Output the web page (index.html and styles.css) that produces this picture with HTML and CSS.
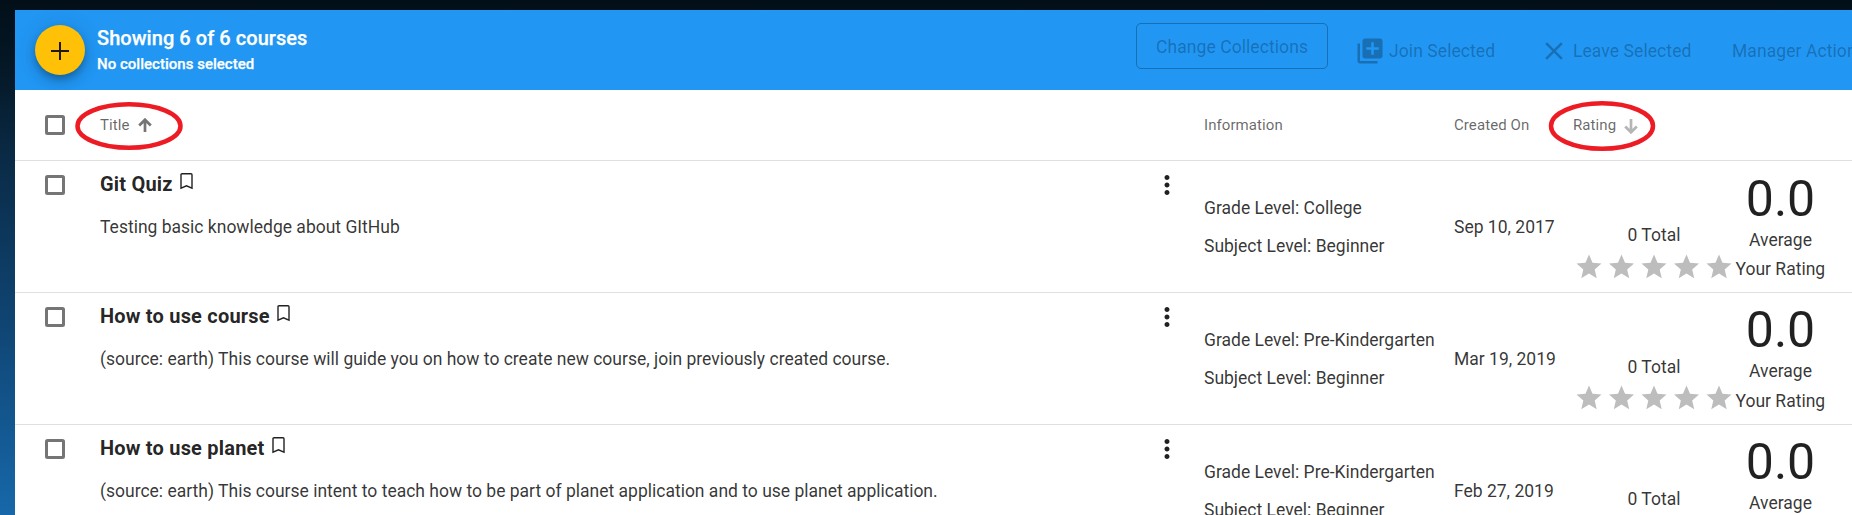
FILE: index.html
```
<!DOCTYPE html>
<html lang="en">
<head>
<meta charset="utf-8">
<title>Courses</title>
<link rel="stylesheet" href="styles.css">
</head>
<body>
<svg class="sprite" aria-hidden="true">
  <symbol id="bookmark" viewBox="0 0 13 17"><path d="M2 .75h9q1 0 1 1v13.500l-5.500-2.400L1 15.250V1.750q0-1 1-1z" fill="none" stroke="currentColor" stroke-width="1.400"/></symbol>
  <symbol id="more" viewBox="0 0 24 24"><path d="M12 8c1.100 0 2-.9 2-2s-.9-2-2-2-2 .9-2 2 .9 2 2 2zm0 2c-1.100 0-2 .9-2 2s.9 2 2 2 2-.9 2-2-.9-2-2-2zm0 6c-1.100 0-2 .9-2 2s.9 2 2 2 2-.9 2-2-.9-2-2-2z"/></symbol>
  <symbol id="star" viewBox="0 0 24 24"><path d="M12 17.270L18.180 21l-1.640-7.030L22 9.240l-7.190-.61L12 2 9.190 8.630 2 9.240l5.460 4.730L5.820 21z"/></symbol>
  <symbol id="stars" viewBox="0 0 160 30">
    <use href="#star" x="0" width="30" height="30"/><use href="#star" x="32.500" width="30" height="30"/><use href="#star" x="65" width="30" height="30"/><use href="#star" x="97.500" width="30" height="30"/><use href="#star" x="130" width="30" height="30"/>
  </symbol>
</svg>
<main class="panel">
  <header class="toolbar">
    <button class="fab" aria-label="Add"><svg width="18" height="18" viewBox="0 0 18 18"><path d="M9 0v18M0 9h18"/></svg></button>
    <div class="summary">
      <div class="summary-title">Showing 6 of 6 courses</div>
      <div class="summary-sub">No collections selected</div>
    </div>
    <nav class="actions">
      <span class="outlined">Change Collections</span>
      <span class="action join"><svg width="30" height="30" viewBox="0 0 24 24"><path d="M4 6H2v14c0 1.100.9 2 2 2h14v-2H4V6zm16-4H8c-1.100 0-2 .9-2 2v12c0 1.100.9 2 2 2h12c1.100 0 2-.9 2-2V4c0-1.100-.9-2-2-2zm-1 9h-4v4h-2v-4H9V9h4V5h2v4h4v2z"/></svg><span>Join Selected</span></span>
      <span class="action leave"><svg width="30" height="30" viewBox="0 0 24 24"><path d="M19 6.410L17.590 5 12 10.590 6.410 5 5 6.410 10.590 12 5 17.590 6.410 19 12 13.410 17.590 19 19 17.590 13.410 12z"/></svg><span>Leave Selected</span></span>
      <span class="action manager">Manager Actions</span>
    </nav>
  </header>

  <div class="head columns">
    <span class="check"></span>
    <div class="sortable">Title
      <svg class="sort-up" width="14" height="14" viewBox="0 0 14 14"><path d="M7 14V2M1.200 7.500L7 1.700l5.800 5.800"/></svg>
      <svg class="ring" width="110" height="50" viewBox="0 0 110 50"><ellipse cx="55" cy="25" rx="51.500" ry="21.800"/></svg>
    </div>
    <span></span>
    <div>Information</div>
    <div>Created On</div>
    <div class="sortable">Rating
      <svg class="sort-down" width="14" height="15" viewBox="0 0 14 15"><path d="M7 0v13M1.200 7.500L7 13.300l5.800-5.800"/></svg>
      <svg class="ring ring-rating" width="110" height="52" viewBox="0 0 110 52"><ellipse cx="55" cy="26" rx="51" ry="22.800"/></svg>
    </div>
  </div>

  <section class="row columns">
    <span class="check"></span>
    <div class="course"><h2>Git Quiz<svg class="mark"><use href="#bookmark"/></svg></h2><p>Testing basic knowledge about GItHub</p></div>
    <svg class="more"><use href="#more"/></svg>
    <div class="info"><p>Grade Level: College</p><p>Subject Level: Beginner</p></div>
    <div class="date">Sep 10, 2017</div>
    <div class="rating"><div class="total">0 Total</div><div class="average"><b>0.0</b><span>Average</span></div><svg class="stars"><use href="#stars"/></svg><div class="yours">Your Rating</div></div>
  </section>
  <section class="row columns">
    <span class="check"></span>
    <div class="course"><h2>How to use course<svg class="mark"><use href="#bookmark"/></svg></h2><p>(source: earth) This course will guide you on how to create new course, join previously created course.</p></div>
    <svg class="more"><use href="#more"/></svg>
    <div class="info"><p>Grade Level: Pre-Kindergarten</p><p>Subject Level: Beginner</p></div>
    <div class="date">Mar 19, 2019</div>
    <div class="rating"><div class="total">0 Total</div><div class="average"><b>0.0</b><span>Average</span></div><svg class="stars"><use href="#stars"/></svg><div class="yours">Your Rating</div></div>
  </section>
  <section class="row columns">
    <span class="check"></span>
    <div class="course"><h2>How to use planet<svg class="mark"><use href="#bookmark"/></svg></h2><p>(source: earth) This course intent to teach how to be part of planet application and to use planet application.</p></div>
    <svg class="more"><use href="#more"/></svg>
    <div class="info"><p>Grade Level: Pre-Kindergarten</p><p>Subject Level: Beginner</p></div>
    <div class="date">Feb 27, 2019</div>
    <div class="rating"><div class="total">0 Total</div><div class="average"><b>0.0</b><span>Average</span></div><svg class="stars"><use href="#stars"/></svg><div class="yours">Your Rating</div></div>
  </section>
</main>
</body>
</html>
```
FILE: styles.css
```
* { box-sizing: border-box; }
html, body { height: 100%; }
body {
  margin: 0;
  padding: 10px 0 0 15px;
  overflow: hidden;
  background: linear-gradient(#020f18 0, #051a2a 80px, #0a2b47 160px, #0f4472 320px, #1768aa 515px);
  font-family: Roboto, sans-serif;
  font-size: 17.5px;
  font-weight: 400;
  color: rgba(0, 0, 0, 0.8);
}
p, h2 { margin: 0; }
svg { display: block; flex: none; }
.sprite { position: absolute; width: 0; height: 0; }

.panel { height: 505px; overflow: hidden; background: #fff; }

.toolbar {
  display: flex;
  height: 80px;
  padding-left: 20px;
  background: #2196f3;
  white-space: nowrap;
  overflow: hidden;
}
.fab {
  display: flex;
  align-items: center;
  justify-content: center;
  flex: none;
  width: 50px;
  height: 50px;
  margin-top: 15px;
  padding: 2px 0 0;
  border: 0;
  border-radius: 50%;
  background: #ffc107;
  fill: none;
  stroke: rgba(0, 0, 0, 0.87);
  stroke-width: 2;
  box-shadow: 0 4px 6px -1px rgba(0, 0, 0, 0.2), 0 7px 12px rgba(0, 0, 0, 0.14), 0 1px 22px rgba(0, 0, 0, 0.12);
}
.summary { flex: none; width: 1038px; padding: 15px 0 0 12px; color: #fff; }
.summary-title { font-size: 20px; font-weight: 500; line-height: 26px; letter-spacing: 0.050px; -webkit-text-stroke: 0.250px; }
.summary-sub { font-size: 15px; font-weight: 500; line-height: 26px; letter-spacing: 0.020px; -webkit-text-stroke: 0.250px; }
.actions { display: flex; flex: none; font-weight: 400; color: rgba(0, 0, 0, 0.26); fill: currentColor; letter-spacing: 0.080px; }
.outlined {
  width: 192px;
  height: 46px;
  margin: 13px 27px 0 13px;
  border: 1px solid currentColor;
  border-radius: 5px;
  line-height: 46px;
  text-align: center;
}
.action { display: flex; align-items: center; height: 30px; margin-top: 26px; }
.join { width: 184px; gap: 4px; }
.leave { width: 193px; gap: 4px; }

.columns { display: grid; grid-template-columns: 85px 1052px 52px 250px 119px 1fr; }
.head {
  height: 70.300px;
  align-items: center;
  font-size: 15px;
  font-weight: 400;
  letter-spacing: 0.080px;
  color: rgba(0, 0, 0, 0.6);
}
.check { width: 20px; height: 20px; margin-left: 30px; border: 3px solid #757575; border-radius: 2.500px; }
.sortable { position: relative; display: flex; align-items: center; gap: 8px; }
.sort-up, .sort-down { fill: none; stroke: #757575; stroke-width: 2.700; }
.sort-down { stroke: #b5b5b5; margin-top: 2px; }
.ring { position: absolute; left: -26px; top: -15px; fill: none; stroke: #ed1c24; stroke-width: 4.500; }
.ring-rating { left: -26px; top: -16px; }

.row { height: 131.750px; border-top: 1px solid #e0e0e0; }
.row .check { margin-top: 13.850px; }
.course h2 { display: flex; padding-top: 11px; font-size: 20px; font-weight: 700; line-height: 25px; letter-spacing: 0.200px; color: rgba(0, 0, 0, 0.87); }
.course p { margin-top: 17px; line-height: 26px; }
.mark { width: 13px; height: 17px; margin: 1px 0 0 7px; }
.more { width: 30px; height: 30px; margin: 9px 0 0 -0.500px; fill: rgba(0, 0, 0, 0.87); }
.info { padding-top: 27.850px; line-height: 38px; }
.date { padding-top: 47px; line-height: 38px; }
.rating { display: grid; grid-template-columns: 159px 97px; grid-template-rows: 91px 28px; justify-content: start; }
.total { padding: 61px 0 0 3px; line-height: 26px; text-align: center; }
.average { display: flex; flex-direction: column; align-items: center; padding-top: 8px; }
.average b { font-size: 50px; font-weight: 400; line-height: 60px; color: rgba(0, 0, 0, 0.87); }
.average span { line-height: 22px; }
.row + .row .average { padding-top: 7px; }
.stars { width: 160px; height: 30px; margin-left: 1px; fill: #bdbdbd; }
.row + .row .stars { margin-top: -1px; }
.yours { padding-left: 3.500px; line-height: 35px; white-space: nowrap; }
```
